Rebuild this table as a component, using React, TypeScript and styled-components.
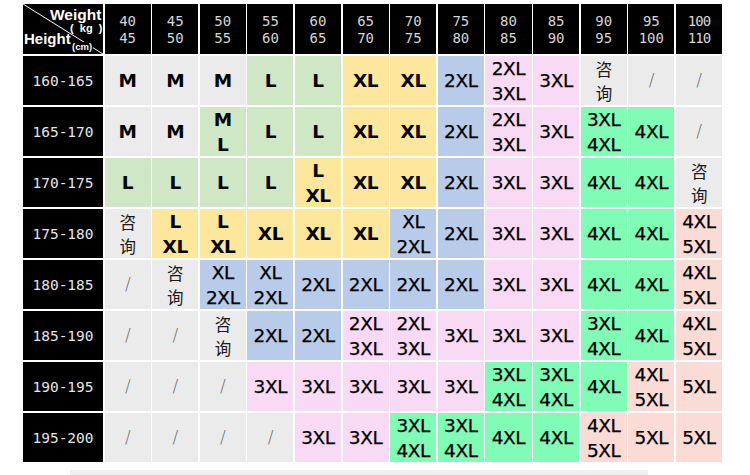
import React from "react";
import styled, { createGlobalStyle } from "styled-components";

const Global = createGlobalStyle`
  html, body { margin: 0; padding: 0; background: #ffffff; }
  body { width: 750px; height: 475px; overflow: hidden; }
`;

type Tone = "gray" | "green" | "yellow" | "blue" | "pink" | "mint" | "salmon";

const toneColor: Record<Tone, string> = {
  gray: "#ebebeb",
  green: "#cfe7c4",
  yellow: "#fde79d",
  blue: "#b8cbe8",
  pink: "#f8daf4",
  mint: "#80fcb6",
  salmon: "#fbdbd6",
};

const Page = styled.div`
  padding: 4px 0 0 23px;
  display: flex;
  flex-direction: column;
`;

const Table = styled.div`
  display: grid;
  grid-template-columns: 80px repeat(13, 1fr);
  grid-template-rows: 50px repeat(8, 49px);
  gap: 2px 1.5px;
  width: 699px;
  background: #ffffff;
`;

const Corner = styled.div`
  position: relative;
  background: #000;
  color: #fff;
  font-family: "Liberation Sans", Arial, sans-serif;
  font-weight: bold;
  overflow: hidden;
`;

const Diagonal = styled.svg`
  position: absolute;
  inset: 0;
  width: 100%;
  height: 100%;
`;

const CornerLabel = styled.div<{ $top: number; $left: number; $size: number; $masked?: boolean }>`
  position: absolute;
  top: ${(p) => p.$top}px;
  left: ${(p) => p.$left}px;
  font-size: ${(p) => p.$size}px;
  line-height: ${(p) => p.$size}px;
  white-space: pre;
  background: ${(p) => (p.$masked ? "#000" : "transparent")};
  padding: ${(p) => (p.$masked ? "0 1px" : "0")};
`;

const WeightHead = styled.div<{ $tight?: boolean }>`
  background: #000;
  color: #d6d6d6;
  font-family: "DejaVu Sans Mono", monospace;
  font-size: 14px;
  line-height: 17px;
  letter-spacing: ${(p) => (p.$tight ? "-1px" : "0")};
  display: flex;
  flex-direction: column;
  align-items: center;
  justify-content: center;
  padding-top: 1px;
`;

const HeightHead = styled.div`
  background: #000;
  color: #e6e6e6;
  font-family: "DejaVu Sans Mono", monospace;
  font-size: 14.5px;
  display: flex;
  align-items: center;
  justify-content: center;
`;

const Cell = styled.div<{ $tone: Tone; $bold?: boolean }>`
  background: ${(p) => toneColor[p.$tone]};
  color: #000;
  font-family: "DejaVu Sans", Verdana, "Noto Sans CJK SC", sans-serif;
  font-size: 18.5px;
  font-weight: ${(p) => (p.$bold ? "bold" : "normal")};
  -webkit-text-stroke: ${(p) => (p.$bold ? "0" : "0.25px #000")};
  line-height: 25px;
  display: flex;
  flex-direction: column;
  align-items: center;
  justify-content: center;
  letter-spacing: -0.4px;
`;

const Consult = styled.span`
  display: block;
  font-family: "Noto Sans CJK SC", sans-serif;
  font-size: 16.5px;
  line-height: 24px;
  color: #1a1a1a;
  -webkit-text-stroke: 0;
`;

const Slash = styled.span`
  font-family: "DejaVu Sans", sans-serif;
  font-weight: 200;
  font-size: 17px;
  color: #6e6e6e;
  -webkit-text-stroke: 0;
`;

const Footer = styled.div`
  margin: 8px 0 0 47px;
  width: 578px;
  height: 6px;
  background: #efefef;
`;

const weights = [
  ["40", "45"], ["45", "50"], ["50", "55"], ["55", "60"], ["60", "65"],
  ["65", "70"], ["70", "75"], ["75", "80"], ["80", "85"], ["85", "90"],
  ["90", "95"], ["95", "100"], ["100", "110"],
];

type C = [string, Tone];

const rows: { h: string; cells: C[] }[] = [
  { h: "160-165", cells: [["M","gray"],["M","gray"],["M","gray"],["L","green"],["L","green"],["XL","yellow"],["XL","yellow"],["2XL","blue"],["2XL|3XL","pink"],["3XL","pink"],["咨询","gray"],["/","gray"],["/","gray"]] },
  { h: "165-170", cells: [["M","gray"],["M","gray"],["M|L","green"],["L","green"],["L","green"],["XL","yellow"],["XL","yellow"],["2XL","blue"],["2XL|3XL","pink"],["3XL","pink"],["3XL|4XL","mint"],["4XL","mint"],["/","gray"]] },
  { h: "170-175", cells: [["L","green"],["L","green"],["L","green"],["L","green"],["L|XL","yellow"],["XL","yellow"],["XL","yellow"],["2XL","blue"],["3XL","pink"],["3XL","pink"],["4XL","mint"],["4XL","mint"],["咨询","gray"]] },
  { h: "175-180", cells: [["咨询","gray"],["L|XL","yellow"],["L|XL","yellow"],["XL","yellow"],["XL","yellow"],["XL","yellow"],["XL|2XL","blue"],["2XL","blue"],["3XL","pink"],["3XL","pink"],["4XL","mint"],["4XL","mint"],["4XL|5XL","salmon"]] },
  { h: "180-185", cells: [["/","gray"],["咨询","gray"],["XL|2XL","blue"],["XL|2XL","blue"],["2XL","blue"],["2XL","blue"],["2XL","blue"],["2XL","blue"],["3XL","pink"],["3XL","pink"],["4XL","mint"],["4XL","mint"],["4XL|5XL","salmon"]] },
  { h: "185-190", cells: [["/","gray"],["/","gray"],["咨询","gray"],["2XL","blue"],["2XL","blue"],["2XL|3XL","pink"],["2XL|3XL","pink"],["3XL","pink"],["3XL","pink"],["3XL","pink"],["3XL|4XL","mint"],["4XL","mint"],["4XL|5XL","salmon"]] },
  { h: "190-195", cells: [["/","gray"],["/","gray"],["/","gray"],["3XL","pink"],["3XL","pink"],["3XL","pink"],["3XL","pink"],["3XL","pink"],["3XL|4XL","mint"],["3XL|4XL","mint"],["4XL","mint"],["4XL|5XL","salmon"],["5XL","salmon"]] },
  { h: "195-200", cells: [["/","gray"],["/","gray"],["/","gray"],["/","gray"],["3XL","pink"],["3XL","pink"],["3XL|4XL","mint"],["3XL|4XL","mint"],["4XL","mint"],["4XL","mint"],["4XL|5XL","salmon"],["5XL","salmon"],["5XL","salmon"]] },
];

const boldSizes = new Set(["M", "L", "XL"]);

function Content({ text }: { text: string }) {
  if (text === "/") return <Slash>/</Slash>;
  if (text === "咨询")
    return (
      <>
        <Consult>咨</Consult>
        <Consult>询</Consult>
      </>
    );
  return (
    <>
      {text.split("|").map((t, i) => (
        <span key={i}>{t}</span>
      ))}
    </>
  );
}

export default function App() {
  return (
    <>
      <Global />
      <Page>
        <Table>
          <Corner>
            <Diagonal viewBox="0 0 80 50" preserveAspectRatio="none">
              <line x1="0" y1="0" x2="80" y2="50" stroke="#fff" strokeWidth="1" />
            </Diagonal>
            <CornerLabel $top={3} $left={27} $size={15.5}>Weight</CornerLabel>
            <CornerLabel $top={19} $left={47} $size={11}>{"(  kg  )"}</CornerLabel>
            <CornerLabel $top={27} $left={1} $size={15}>Height</CornerLabel>
            <CornerLabel $top={38} $left={48} $size={9.5} $masked>(cm)</CornerLabel>
          </Corner>
          {weights.map(([a, b], i) => (
            <WeightHead key={a} $tight={i === weights.length - 1}>
              <span>{a}</span>
              <span>{b}</span>
            </WeightHead>
          ))}
          {rows.map((r) => (
            <React.Fragment key={r.h}>
              <HeightHead>{r.h}</HeightHead>
              {r.cells.map(([t, tone], i) => (
                <Cell key={i} $tone={tone} $bold={t.split("|").every((s) => boldSizes.has(s))}>
                  <Content text={t} />
                </Cell>
              ))}
            </React.Fragment>
          ))}
        </Table>
        <Footer />
      </Page>
    </>
  );
}
